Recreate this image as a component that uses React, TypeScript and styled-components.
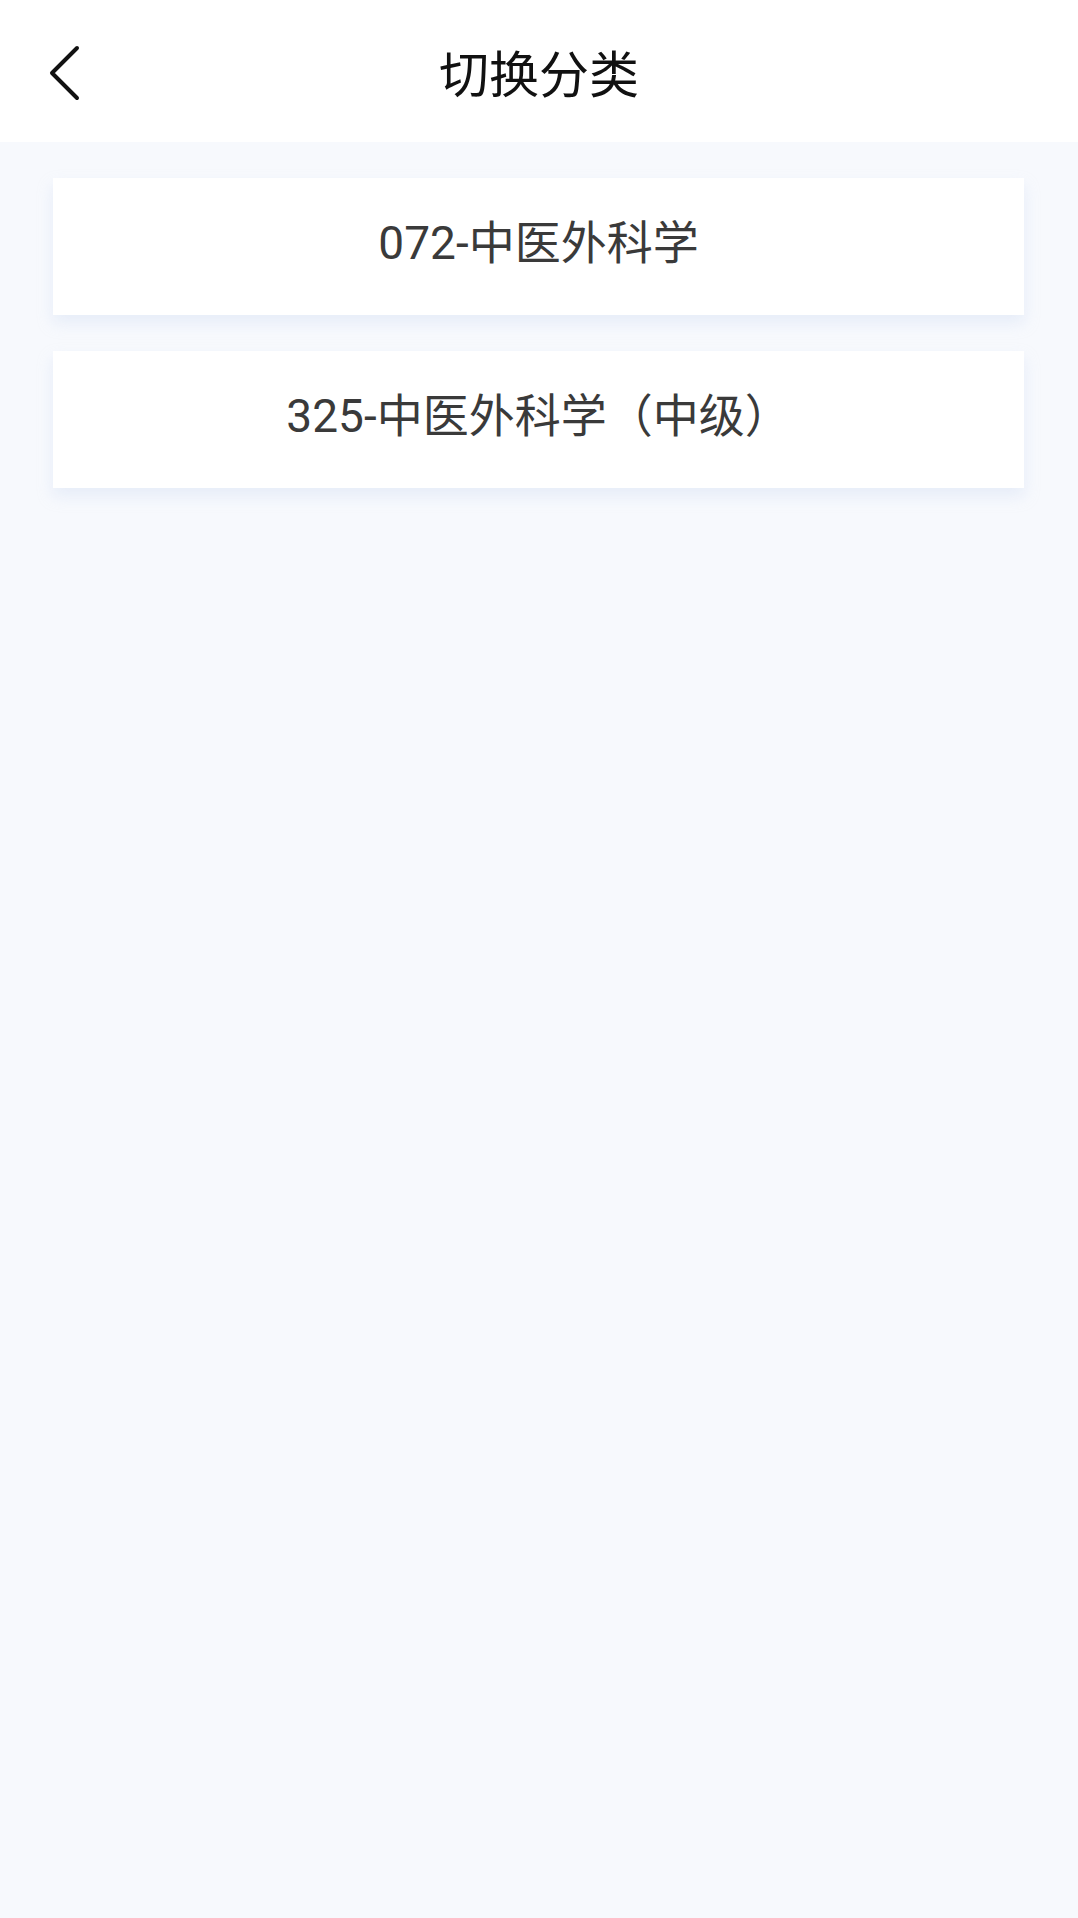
import React from 'react';
import styled, { createGlobalStyle } from 'styled-components';

const GlobalStyle = createGlobalStyle`
  html, body {
    margin: 0;
    padding: 0;
    background: #f7f9fd;
  }
  body {
    font-family: "Roboto", "Noto Sans CJK SC", sans-serif;
  }
`;

const Page = styled.div`
  min-height: 1918px;
  background: #f7f9fd;
`;

const Header = styled.header`
  position: relative;
  height: 142px;
  background: #ffffff;
  display: flex;
  align-items: center;
  justify-content: center;
`;

const BackButton = styled.button`
  position: absolute;
  left: 40px;
  top: 40px;
  width: 48px;
  height: 66px;
  padding: 0;
  border: none;
  background: none;
  display: flex;
  align-items: center;
  justify-content: center;
  cursor: pointer;
`;

const Title = styled.h1`
  margin: 0;
  font-size: 50px;
  font-weight: 400;
  color: #111111;
  font-family: "Noto Sans CJK SC", sans-serif;
`;

const List = styled.div`
  display: flex;
  flex-direction: column;
  gap: 36px;
  padding: 36px 54px 0 53px;
`;

const Item = styled.div`
  height: 137px;
  box-sizing: border-box;
  padding-bottom: 8px;
  background: #ffffff;
  display: flex;
  align-items: center;
  justify-content: center;
  box-shadow: 0 8px 14px rgba(200, 215, 240, 0.35);
  font-size: 46px;
  line-height: 1;
  color: #3a3a3a;
  cursor: pointer;
`;

const categories = ['072-中医外科学', '325-中医外科学（中级）'];

export default function App() {
  return (
    <Page>
      <GlobalStyle />
      <Header>
        <BackButton aria-label="返回">
          <svg width="32" height="56" viewBox="0 0 32 56" fill="none">
            <path d="M29 3 L4 28 L29 53" stroke="#111" strokeWidth="4" strokeLinecap="round" strokeLinejoin="round" />
          </svg>
        </BackButton>
        <Title>切换分类</Title>
      </Header>
      <List>
        {categories.map((c) => (
          <Item key={c}>{c}</Item>
        ))}
      </List>
    </Page>
  );
}
